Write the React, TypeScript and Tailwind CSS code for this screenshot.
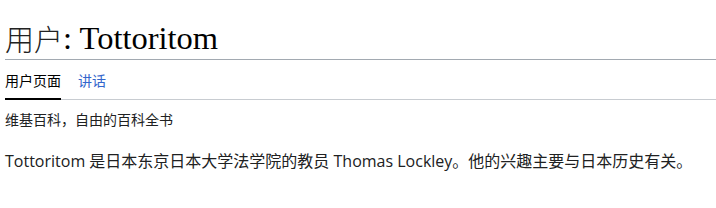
export default function App() {
  return (
    <div className="bg-white pl-[5px] pt-[15px] text-black">
      {/* Title */}
      <h1 className="flex h-[45px] items-end overflow-hidden border-b border-[#a2a9b1] pb-[3px] text-black">
        <span className="font-['Noto_Sans_CJK_SC',sans-serif] text-[29px] leading-[36px] font-light text-[#222]">用户</span>
        <span className="font-['Liberation_Serif',serif] text-[32.5px] leading-[36px]">: Tottoritom</span>
      </h1>

      {/* Tabs */}
      <div className="flex gap-[17px] border-b border-[#c8ccd1] font-['Noto_Sans_CJK_SC',sans-serif] text-[14px]">
        <div className="-mb-px flex h-[40px] items-center border-b-2 border-black pt-[2px] leading-[20px] text-black">用户页面</div>
        <div className="-mb-px flex h-[40px] items-center leading-[20px] text-[#3366cc]">讲话</div>
      </div>

      {/* Tagline */}
      <div className="mt-[9px] font-['Noto_Sans_CJK_SC',sans-serif] text-[14px] leading-[20px] text-[#202122]">
        维基百科，自由的百科全书
      </div>

      {/* Body */}
      <p className="mt-[21px] font-['Open_Sans','Noto_Sans_CJK_SC',sans-serif] text-[16px] leading-[22px] text-[#202122]">
        Tottoritom 是日本东京日本大学法学院的教员 Thomas Lockley。他的兴趣主要与日本历史有关。
      </p>
    </div>
  );
}
